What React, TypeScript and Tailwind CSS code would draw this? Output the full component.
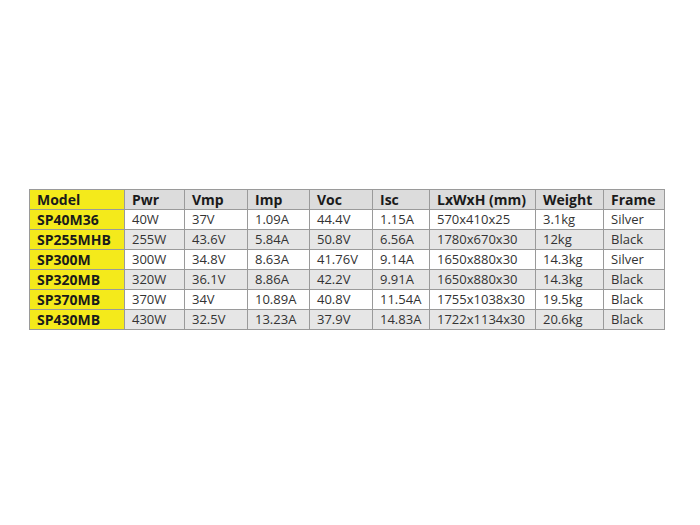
import React from 'react';

const columns = [
  { label: 'Model', w: 'w-[95px]' },
  { label: 'Pwr', w: 'w-[60px]' },
  { label: 'Vmp', w: 'w-[63px]' },
  { label: 'Imp', w: 'w-[62px]' },
  { label: 'Voc', w: 'w-[63px]' },
  { label: 'Isc', w: 'w-[57px]' },
  { label: 'LxWxH (mm)', w: 'w-[106px]' },
  { label: 'Weight', w: 'w-[68px]' },
  { label: 'Frame', w: 'w-[61px]' },
];

const rows = [
  ['SP40M36', '40W', '37V', '1.09A', '44.4V', '1.15A', '570x410x25', '3.1kg', 'Silver'],
  ['SP255MHB', '255W', '43.6V', '5.84A', '50.8V', '6.56A', '1780x670x30', '12kg', 'Black'],
  ['SP300M', '300W', '34.8V', '8.63A', '41.76V', '9.14A', '1650x880x30', '14.3kg', 'Silver'],
  ['SP320MB', '320W', '36.1V', '8.86A', '42.2V', '9.91A', '1650x880x30', '14.3kg', 'Black'],
  ['SP370MB', '370W', '34V', '10.89A', '40.8V', '11.54A', '1755x1038x30', '19.5kg', 'Black'],
  ['SP430MB', '430W', '32.5V', '13.23A', '37.9V', '14.83A', '1722x1134x30', '20.6kg', 'Black'],
];

export default function App() {
  return (
    <div className="w-[700px] h-[525px] bg-white flex items-start pt-[189px] pl-[29px] font-['Open_Sans',sans-serif]">
      <table className="table-fixed w-[636px] border-collapse border border-[#9a9a9a] leading-none">
        <colgroup>
          {columns.map(c => (
            <col key={c.label} className={c.w} />
          ))}
        </colgroup>
        <thead>
          <tr className="h-[20px]">
            {columns.map((c, i) => (
              <th
                key={c.label}
                className={`border border-[#9a9a9a] text-left text-[14px] font-bold text-[#1a1a1a] pl-[7px] pr-0 whitespace-nowrap ${i === 0 ? 'bg-[#f4ea1b]' : 'bg-[#dcdcdc]'}`}
              >
                {c.label}
              </th>
            ))}
          </tr>
        </thead>
        <tbody>
          {rows.map((r, ri) => (
            <tr key={r[0]} className={`h-[20px] ${ri % 2 === 1 ? 'bg-[#e6e6e6]' : 'bg-white'}`}>
              {r.map((cell, ci) => (
                <td
                  key={ci}
                  className={`border border-[#9a9a9a] pl-[7px] pr-0 whitespace-nowrap ${ci === 0 ? 'bg-[#f4ea1b] text-[14px] font-bold text-[#1a1a1a]' : 'text-[13px] text-[#333333]'}`}
                >
                  {cell}
                </td>
              ))}
            </tr>
          ))}
        </tbody>
      </table>
    </div>
  );
}
